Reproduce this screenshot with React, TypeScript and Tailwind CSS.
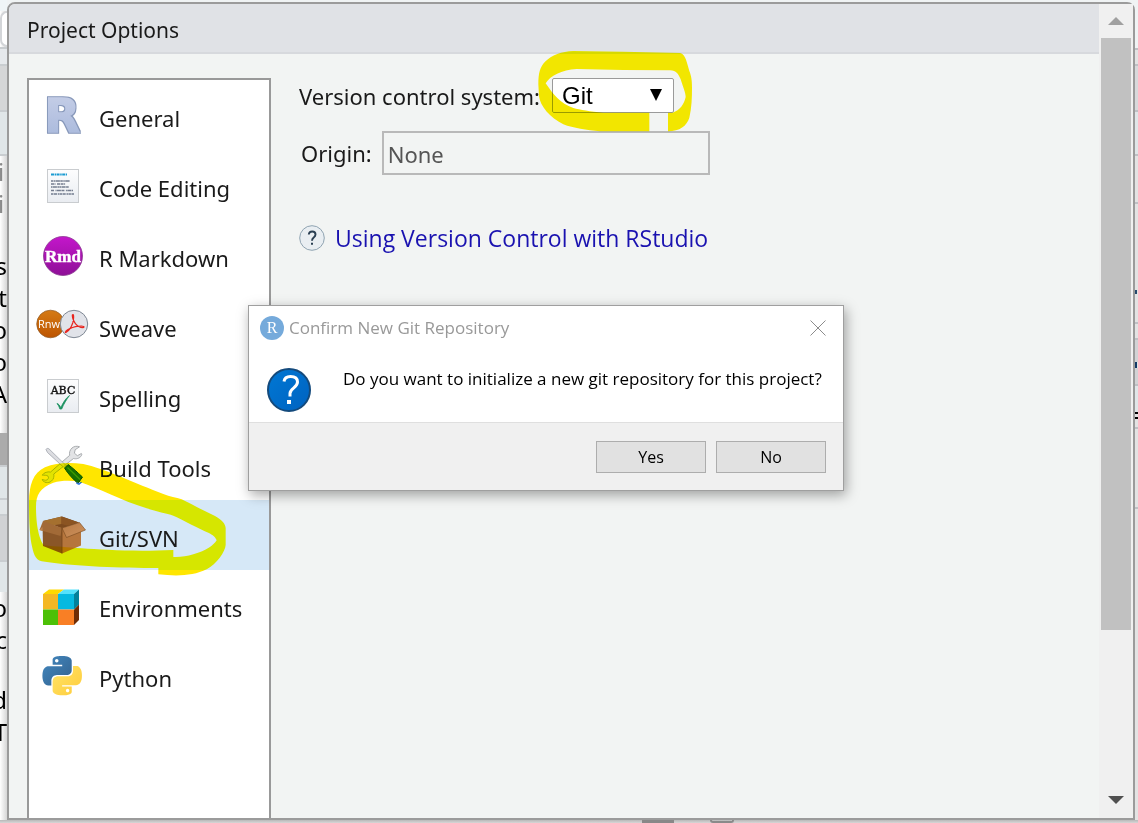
import React from "react";

const sans = "font-['Noto_Sans','Open_Sans',sans-serif]";

function GeneralIcon() {
  return (
    <svg viewBox="0 0 70 70" className="size-[70px]" aria-hidden="true">
      <defs>
        <linearGradient id="rBlue" x1="0" y1="0" x2="0" y2="1">
          <stop offset="0" stopColor="#c8d0e8" />
          <stop offset="1" stopColor="#a6b7db" />
        </linearGradient>
        <filter id="rEdge" x="-10%" y="-10%" width="120%" height="120%">
          <feMorphology in="SourceAlpha" operator="dilate" radius="0.600" result="wide" />
          <feFlood floodColor="#8798ba" />
          <feComposite in2="wide" operator="in" />
          <feMerge>
            <feMergeNode />
            <feMergeNode in="SourceGraphic" />
          </feMerge>
        </filter>
      </defs>
      <text
        x="15.500"
        y="52"
        fontFamily="DejaVu Sans"
        fontWeight="700"
        fontSize="46"
        fill="url(#rBlue)"
        stroke="url(#rBlue)"
        strokeWidth="1.500"
        filter="url(#rEdge)"
      >
        R
      </text>
    </svg>
  );
}

function CodeIcon() {
  const rows: [number, number, string][] = [
    [31, 19, "2.5 .5 1.5 .4 4 .4"],
    [34, 15, "3 .5 1 1.5 3 .6"],
    [37, 18, "1.5 .4 4 .5 2 .3"],
    [40.5, 22, "3 1.5 1 .4 4 .5"],
    [44, 23, "2.5 .5 3 .8 1.500 .4"],
  ];
  return (
    <svg viewBox="0 0 70 70" className="size-[70px]" aria-hidden="true">
      <defs>
        <linearGradient id="paper" x1="0" y1="0" x2="0" y2="1">
          <stop offset="0" stopColor="#fdfdfe" />
          <stop offset="1" stopColor="#e9ecf1" />
        </linearGradient>
      </defs>
      <rect x="18.500" y="19.500" width="31" height="33" fill="url(#paper)" stroke="#c9cccf" />
      <path d="M22 24.500h16" stroke="#1b9bd2" strokeWidth="2.200" strokeDasharray="3 .6 1.500 .5" />
      {rows.map(([y, w, dash]) => (
        <path key={y} d={`M22 ${y}h${w}`} stroke="#737c8e" strokeWidth="1.700" strokeDasharray={dash} />
      ))}
    </svg>
  );
}

function RmdIcon() {
  return (
    <svg viewBox="0 0 70 70" className="size-[70px]" aria-hidden="true">
      <defs>
        <linearGradient id="rmd" x1="0" y1="0" x2="0" y2="1">
          <stop offset="0" stopColor="#c416cb" />
          <stop offset="1" stopColor="#8e1097" />
        </linearGradient>
      </defs>
      <circle cx="34" cy="36" r="19.500" fill="url(#rmd)" stroke="#8a3a90" strokeWidth=".8" />
      <text x="34" y="41.500" textAnchor="middle" fontFamily="Liberation Serif" fontWeight="700" fontSize="17" fill="#fff" stroke="#fff" strokeWidth=".4">Rmd</text>
    </svg>
  );
}

function SweaveIcon() {
  return (
    <svg viewBox="0 0 70 70" className="size-[70px]" aria-hidden="true">
      <defs>
        <linearGradient id="rnw" x1="0" y1="0" x2="0" y2="1">
          <stop offset="0" stopColor="#d57b15" />
          <stop offset="1" stopColor="#bd5400" />
        </linearGradient>
      </defs>
      <circle cx="21.500" cy="34" r="13.800" fill="url(#rnw)" stroke="#8e5a28" strokeWidth=".7" />
      <text x="9" y="38" fontFamily="Open Sans" fontSize="11" fill="#fff">Rnw</text>
      <circle cx="45" cy="34" r="13.700" fill="#e1e3e9" stroke="#7f8894" strokeWidth="1" />
      <path
        d="M44 24.500c-1 0-.8 2 .2 5 1.200 3.400 3.200 5.800 6 7.300 2.300 1.100 4.800 1 4.800.1 0-1.100-4-1.200-8.500-.2-4 1-7.500 2.600-9.700 4.600-1 1-.6 1.600.4 1 2.500-1.600 5.300-5.600 6.600-9.600.9-3 1.200-8.200.2-8.200z"
        fill="none"
        stroke="#e8251f"
        strokeWidth="1.200"
      />
    </svg>
  );
}

function SpellingIcon() {
  return (
    <svg viewBox="0 0 70 70" className="size-[70px]" aria-hidden="true">
      <rect x="18.500" y="19.500" width="31" height="33" fill="url(#paper)" stroke="#c9cccf" />
      <text x="34" y="33.500" textAnchor="middle" fontFamily="DejaVu Serif" fontSize="11" fill="#111" stroke="#111" strokeWidth=".4">ABC</text>
      <path d="M28 43.500c1.800.5 3 2.300 3.800 4.300C34 42.500 37 38 40.500 35.500c-3 4-5.800 8.500-7.800 13.500h-1.800c-.6-2.300-1.600-4-2.900-5.500z" fill="#1a9160" stroke="#1a9160" strokeWidth=".8" />
    </svg>
  );
}

function BuildIcon() {
  return (
    <svg viewBox="0 0 70 70" className="size-[70px]" aria-hidden="true">
      <path
        d="M50.500 16.800c-2.500-1-5.500-.6-7.500 1.200-2.200 2-2.900 4.700-2.300 7.300L21.500 42c-3-.6-6.500.3-8.300 3.200 1.800.2 4.300-.3 5.800 1 1 1.300.2 2.700-.8 3.600-1.700 1-3.600-.4-5.200-.2 1.800 3.200 6.200 4.200 9.400 1.600 2.400-2 3-4.800 2.400-7.200L44.500 28.500c2.700.7 6 .2 8-3 .4-.8.300-1.500-.1-2l-4 2.200-3-2.500.8-3.500z"
        fill="#e2e3e5"
        stroke="#a2a5a8"
        strokeWidth=".9"
      />
      <path d="M17 19.500c.5-1.200 2-1.400 3-.6L36.500 35l-2 2.200L18.500 22.500z" fill="#dcdde1" stroke="#a0a3ac" strokeWidth=".8" />
      <path d="M35.500 38l3.500-3.500c5 3.500 9.500 8 14.500 12.500l-4.500 6.500c-5-4.500-10-9.500-13.500-15.500z" fill="#16701d" stroke="#0b4c12" strokeWidth="1" />
      <path d="M38.500 37.500l12.500 12" stroke="#3f9b3c" strokeWidth="1.200" />
      <path d="M47.500 53l2.500 1.200 2.500-2.200" fill="none" stroke="#2a70dd" strokeWidth="1.500" />
    </svg>
  );
}

function BoxIcon() {
  return (
    <svg viewBox="0 0 70 70" className="size-[70px]" aria-hidden="true">
      <defs>
        <linearGradient id="boxFlap" x1="0" y1="0" x2="1" y2="1">
          <stop offset="0" stopColor="#b87a44" />
          <stop offset="1" stopColor="#cd915c" />
        </linearGradient>
      </defs>
      <path d="M14 21l19-4.500 17 6-17 6z" fill="#7d4a1e" />
      <path d="M14 21l18.500-4.500V24L20 26z" fill="#a5702f" />
      <path d="M32.500 16.500L50 22.500l-10 3.500-7.500-2z" fill="#8b5422" />
      <path d="M13.500 24l.5 22 19 7.500V28z" fill="#8a5628" />
      <path d="M33 28l19-4v21.500L33 53.500z" fill="#b6763d" />
      <path d="M14 21l19 7-1.500 8L10.500 30z" fill="#a26a37" />
      <path d="M13.500 27l-3 3 3 .8z" fill="#c08650" />
      <path d="M33 28l17.500-5.500L56.500 30 37.500 37.500z" fill="url(#boxFlap)" stroke="#76461d" strokeWidth=".6" />
      <path d="M33 28v25.500" stroke="#734419" strokeWidth=".8" />
    </svg>
  );
}

function EnvIcon() {
  return (
    <svg viewBox="0 0 70 70" className="size-[70px]" aria-hidden="true">
      <path d="M14 24l6-4.500h15L29 24z" fill="#ffd900" />
      <path d="M29 24l6-4.500h15L45 24z" fill="#55e2fb" />
      <path d="M14 24h15v15.500H14z" fill="#f4b724" />
      <path d="M29 24h16v15.500H29z" fill="#06b9e0" />
      <path d="M14 39.500h15V55H14z" fill="#4cc007" />
      <path d="M29 39.500h16V55H29z" fill="#f97f25" />
      <path d="M45 24l5-4.500v15l-5 5z" fill="#03819a" />
      <path d="M45 39.500l5-5V50l-5 5z" fill="#6e2c06" />
    </svg>
  );
}

const snake =
  "M14.25.18l.9.2.73.26.59.3.45.32.34.34.25.34.16.33.1.3.04.26.02.2-.01.13V8.5l-.05.63-.13.55-.21.46-.26.38-.3.31-.33.25-.35.19-.35.14-.33.1-.3.07-.26.04-.21.02H8.77l-.69.05-.59.14-.5.22-.41.27-.33.32-.27.35-.2.36-.15.37-.1.35-.07.32-.04.27-.02.21v3.06H3.17l-.21-.03-.28-.07-.32-.12-.35-.18-.36-.26-.36-.36-.35-.46-.32-.59-.28-.73-.21-.88-.14-1.05-.05-1.23.06-1.22.16-1.04.24-.87.32-.71.36-.57.4-.44.42-.33.42-.24.4-.16.36-.1.32-.05.24-.01h.16l.06.01h8.16v-.83H6.18l-.01-2.75-.02-.37.05-.34.11-.31.17-.28.25-.26.31-.23.38-.2.44-.18.51-.15.58-.12.64-.1.71-.06.77-.04.84-.02 1.27.05zm-6.3 1.98l-.23.33-.08.41.08.41.23.34.33.22.41.09.41-.09.33-.22.23-.34.08-.41-.08-.41-.23-.33-.33-.22-.41-.09-.41.09z";

function PythonIcon() {
  return (
    <svg viewBox="0 0 70 70" className="size-[70px]" aria-hidden="true">
      <defs>
        <linearGradient id="pyBlue" x1="0" y1="0" x2="1" y2="1">
          <stop offset="0" stopColor="#4288c0" />
          <stop offset="1" stopColor="#33618d" />
        </linearGradient>
        <linearGradient id="pyYellow" x1="1" y1="1" x2="0" y2="0">
          <stop offset="0" stopColor="#ffe468" />
          <stop offset="1" stopColor="#ffcc3a" />
        </linearGradient>
      </defs>
      <g transform="translate(13.500 16) scale(1.640)">
        <path d={snake} fill="url(#pyBlue)" />
        <path d={snake} fill="url(#pyYellow)" transform="rotate(180 12 12)" />
      </g>
    </svg>
  );
}

const sections = [
  { name: "General", Icon: GeneralIcon },
  { name: "Code Editing", Icon: CodeIcon },
  { name: "R Markdown", Icon: RmdIcon },
  { name: "Sweave", Icon: SweaveIcon },
  { name: "Spelling", Icon: SpellingIcon },
  { name: "Build Tools", Icon: BuildIcon },
  { name: "Git/SVN", Icon: BoxIcon },
  { name: "Environments", Icon: EnvIcon },
  { name: "Python", Icon: PythonIcon },
];

function ListMarker() {
  return (
    <svg
      viewBox="27 120 600 360"
      className="pointer-events-none absolute -top-10 left-0 z-10 h-[120px] w-[200px] mix-blend-darken"
      aria-hidden="true"
    >
      <path
        d="M27 245C28 195 38 160 75 142C110 127 150 127 190 132C250 144 350 192 430 222C450 230 468 232 485 238C510 250 550 272 585 288C606 300 617 312 617 325V375C616 395 590 432 560 448C520 468 470 469 415 463V444C300 445 150 438 65 424C45 420 40 400 34 370C29 340 27 300 27 245Z
           M48 260C48 225 60 203 100 188C125 181 155 181 180 186C240 206 300 240 380 265C410 275 440 281 460 287C490 300 540 328 565 338C578 344 588 353 590 361C580 376 560 392 520 403C500 409 480 412 460 411V390C350 395 250 390 185 385C140 382 110 380 72 376C62 365 48 330 48 260Z"
        fill="#ffe600"
        fillRule="evenodd"
      />
    </svg>
  );
}

function SelectMarker() {
  return (
    <svg
      viewBox="741 27 471 249"
      className="pointer-events-none absolute -left-[15px] -top-7 h-[83px] w-[157px] mix-blend-darken"
      aria-hidden="true"
    >
      <path
        d="M745 130C745 95 750 78 765 62C785 43 815 31 850 30L1000 32L1170 36C1182 38 1188 50 1198 90C1204 105 1206 118 1206 140C1206 170 1205 200 1198 230C1190 255 1170 270 1134 271V215H1078V271H930C890 267 850 262 820 250C780 230 750 195 747 165Z
           M767 127C780 105 815 86 860 84L1000 87L1140 88C1160 90 1163 96 1172 115C1178 135 1187 155 1187 168C1182 190 1170 208 1148 215H940C900 212 870 206 850 201C810 188 790 160 767 127Z"
        fill="#f4e600"
        fillRule="evenodd"
      />
    </svg>
  );
}

function LeftEdge() {
  const line = "h-0.5 shrink-0 bg-[#c9cdd0]";
  return (
    <div aria-hidden="true" className="flex w-[7px] shrink-0 flex-col overflow-hidden bg-gradient-to-r from-white to-[#d6d6d6] text-2xl/8 text-black">
      <div className="h-[11px] shrink-0 bg-[#f0f5f7]" />
      <div className="h-[36px] shrink-0 rounded-l-lg border-2 border-r-0 border-[#d3d5d8] bg-white" />
      <div className={line} />
      <div className="h-[15px] shrink-0 bg-[#e6e9ec]" />
      <div className={line} />
      <div className="h-11 shrink-0 bg-[#d5d6d7]" />
      <div className={line} />
      <div className="h-[42px] shrink-0 bg-[#e0e6e8]" />
      <div className={line} />
      <div className="flex h-[94px] shrink-0 flex-col items-start text-[#8a8a8a]">
        <span className="-ml-0.5">i</span>
        <span className="-ml-0.5">i</span>
      </div>
      <div className="flex h-[183px] shrink-0 flex-col items-end">
        <span>s</span>
        <span>t</span>
        <span>o</span>
        <span>o</span>
        <span>A</span>
      </div>
      <div className="h-8 shrink-0 bg-[#ababab]" />
      <div className={line} />
      <div className="h-[31px] shrink-0 bg-[#e0e6e8]" />
      <div className={line} />
      <div className="h-3.5 shrink-0 bg-[#e2e6e8]" />
      <div className={line} />
      <div className="h-11 shrink-0 bg-[#d1d2d4]" />
      <div className={line} />
      <div className="h-[30px] shrink-0 bg-[#e0e6e8]" />
      <div className="flex flex-col items-end">
        <span>o</span>
        <span>c</span>
      </div>
      <div className="mt-7 flex flex-col items-end">
        <span>d</span>
        <span>T</span>
      </div>
    </div>
  );
}

function RightEdge() {
  const line = "h-0.5 shrink-0 bg-[#bfc1c5]";
  return (
    <div aria-hidden="true" className="flex w-[3px] shrink-0 flex-col bg-[#e3e3e3]">
      <div className="h-12 shrink-0 bg-[#f0f3f4]" />
      <div className={line} />
      <div className="h-3.5 shrink-0" />
      <div className={line} />
      <div className="h-11 shrink-0 bg-[#d8d9db]" />
      <div className={line} />
      <div className="h-[42px] shrink-0 bg-[#e0e6e8]" />
      <div className={line} />
      <div className="h-[46px] shrink-0" />
      <div className={line} />
      <div className="h-[86px] shrink-0" />
      <div className="h-1 w-0.5 shrink-0 bg-[#24486b]" />
      <div className="h-7 shrink-0" />
      <div className={line} />
      <div className="h-3.5 shrink-0" />
      <div className={line} />
      <div className="h-[22px] shrink-0 bg-[#d2d3d5]" />
      <div className="h-1.5 w-0.5 shrink-0 bg-[#123a66]" />
      <div className="h-4 shrink-0 bg-[#d2d3d5]" />
      <div className={line} />
      <div className="h-[26px] shrink-0 bg-[#e0e6e8]" />
      <div className="h-0.5 shrink-0 bg-black" />
      <div className="h-[3px] shrink-0" />
      <div className="h-0.5 shrink-0 bg-black" />
      <div className="h-2 shrink-0" />
      <div className={line} />
      <div className="h-[78px] shrink-0" />
      <div className={line} />
    </div>
  );
}

function Scrollbar() {
  return (
    <div className="flex w-[34px] shrink-0 flex-col items-center bg-[#f0f0f0]">
      <button type="button" aria-label="Scroll up" className="flex h-[34px] w-full items-center justify-center">
        <svg viewBox="0 0 16 8" className="h-2 w-4"><path d="M8 0l8 8H0z" fill="#a0a0a0" /></svg>
      </button>
      <div className="w-[30px] grow-[592] bg-[#c1c1c1]" />
      <div className="grow-[152]" />
      <button type="button" aria-label="Scroll down" className="flex h-9 w-full items-center justify-center">
        <svg viewBox="0 0 16 8" className="h-2 w-4"><path d="M8 8l8-8H0z" fill="#505050" /></svg>
      </button>
    </div>
  );
}

function ConfirmDialog() {
  const button = "h-8 w-[110px] border border-[#adadad] bg-[#e1e1e1] text-base text-black";
  return (
    <div
      role="dialog"
      aria-label="Confirm New Git Repository"
      className="absolute left-[248px] top-[305px] z-20 w-[596px] border border-[#9f9f9f] bg-white font-['Open_Sans','Noto_Sans',sans-serif] shadow-[2px_4px_12px_rgba(0,0,0,0.35)]"
    >
      <div className="flex h-11 items-center gap-[5px] pl-[11px] pr-4">
        <svg viewBox="0 0 24 24" className="size-6" aria-hidden="true">
          <circle cx="12" cy="12" r="12" fill="#75aadb" />
          <text x="12" y="17" textAnchor="middle" fontFamily="Liberation Serif" fontSize="16" fill="#fff">R</text>
        </svg>
        <h2 className="grow text-[17px] leading-6 text-[#999999]">Confirm New Git Repository</h2>
        <button type="button" aria-label="Close" className="p-px">
          <svg viewBox="0 0 16 16" className="size-4"><path d="M.5.5l15 15M15.500.5l-15 15" stroke="#8c8c8c" /></svg>
        </button>
      </div>
      <div className="flex h-[72px] items-start gap-8 pl-[18px]">
        <svg viewBox="0 0 44 44" className="mt-[18px] size-11 shrink-0" aria-hidden="true">
          <defs>
            <linearGradient id="askBlue" x1="0" y1="0" x2="1" y2="1">
              <stop offset="0" stopColor="#0078d4" />
              <stop offset="1" stopColor="#0062c0" />
            </linearGradient>
          </defs>
          <circle cx="22" cy="22" r="21" fill="url(#askBlue)" stroke="#144a7c" strokeWidth="2" />
          <path d="M17 13.500C17.500 10 19.500 8.500 23.500 8.500c4.500 0 7 2 7 5.500 0 2.800-1.700 4.300-3.700 5.900-2.200 1.700-3.800 3-3.800 5.600v3" fill="none" stroke="#fff" strokeWidth="3" />
          <path d="M20 32h4v4h-4z" fill="#fff" />
        </svg>
        <p className="mt-[17px] whitespace-nowrap text-[17px] leading-6 text-black">Do you want to initialize a new git repository for this project?</p>
      </div>
      <div className="flex justify-end gap-2.5 border-t border-[#dfdfdf] bg-[#f0f0f0] pb-[17px] pr-[17px] pt-[18px]">
        <button type="button" className={button}>Yes</button>
        <button type="button" className={button}>No</button>
      </div>
    </div>
  );
}

export default function App() {
  return (
    <div className={`relative flex h-screen flex-col overflow-hidden bg-[#f0f3f4] ${sans} text-[22px] leading-[30px] text-[#1a1a1a]`}>
      <div className="flex min-h-0 flex-1">
        <LeftEdge />
        <div className="mt-0.5 flex min-w-0 flex-1 rounded-t-lg border-2 border-[#9b9b9b] bg-[#f2f4f3]">
          <div className="flex min-w-0 flex-1 flex-col">
            <header className="flex h-[50px] shrink-0 items-center rounded-tl-md border-b-2 border-[#d7d9dd] bg-[#e0e2e6] pl-[18px] pt-1">
              <h1 className="text-[21px]">Project Options</h1>
            </header>
            <div className="flex min-h-0 flex-1 px-[18px] pt-6">
              <nav className="w-[244px] shrink-0 border-2 border-b-0 border-[#999999] bg-white">
                <ul>
                  {sections.map(({ name, Icon }) => {
                    const current = name === "Git/SVN";
                    return (
                      <li key={name} className="relative">
                        <button
                          type="button"
                          aria-current={current ? "page" : undefined}
                          className={`flex h-[70px] w-full items-center text-left ${current ? "bg-[#d6e8f7]" : ""}`}
                        >
                          <Icon />
                          <span className="pt-1.5">{name}</span>
                        </button>
                        {current && <ListMarker />}
                      </li>
                    );
                  })}
                </ul>
              </nav>
              <main className="min-w-0 flex-1 pl-7">
                <div className="flex items-center gap-3">
                  <label htmlFor="vcs">Version control system:</label>
                  <div className="relative h-[35px] w-[122px]">
                    <select
                      id="vcs"
                      className="h-full w-full appearance-none rounded-xs border border-[#9a9a9a] bg-white pl-[9px] font-['Liberation_Sans',sans-serif] text-2xl text-black"
                    >
                      <option>Git</option>
                      <option>(None)</option>
                    </select>
                    <svg viewBox="0 0 12 12" className="pointer-events-none absolute right-3 top-[11px] size-3" aria-hidden="true">
                      <path d="M0 0h12L6 12z" fill="#000" />
                    </svg>
                    <SelectMarker />
                  </div>
                </div>
                <div className="mt-[18px] flex items-center gap-2.5 pl-0.5">
                  <label htmlFor="origin">Origin:</label>
                  <input
                    id="origin"
                    readOnly
                    value="None"
                    className="h-11 w-82 border-2 border-[#b9b9b9] bg-transparent px-1 pt-0.5 text-[#555555]"
                  />
                </div>
                <div className="mt-12 flex items-center gap-2.5">
                  <svg viewBox="0 0 26 26" className="size-[26px]" aria-hidden="true">
                    <circle cx="13" cy="13" r="12.300" fill="#e9eef2" stroke="#8fa3b1" />
                    <path d="M9.800 9.500c.2-2 1.500-3 3.400-3 2 0 3.300 1.200 3.300 2.900 0 1.500-.8 2.200-1.800 3-1.200.9-1.700 1.700-1.700 3.300" fill="none" stroke="#2a3f52" strokeWidth="1.900" />
                    <path d="M12 17.700h2v2h-2z" fill="#2a3f52" />
                  </svg>
                  <a href="#version-control" className="font-['Open_Sans','Noto_Sans',sans-serif] text-[23px] text-[#1a12b0]">Using Version Control with RStudio</a>
                </div>
              </main>
            </div>
          </div>
          <Scrollbar />
        </div>
        <RightEdge />
      </div>
      <div aria-hidden="true" className="flex h-[3px] shrink-0 justify-center gap-9 bg-gradient-to-b from-[#b9b9b9] to-[#d6d6d6] pl-[238px]">
        <div className="w-8 bg-[#888888]" />
        <div className="w-6 rounded-b border-2 border-t-0 border-[#8a8a8a]" />
      </div>
      <ConfirmDialog />
    </div>
  );
}
